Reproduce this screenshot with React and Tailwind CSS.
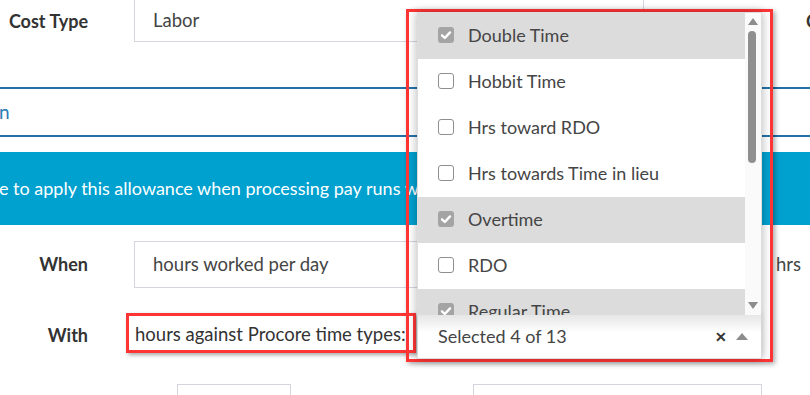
import React from "react";

const items = [
  { label: "Double Time", checked: true },
  { label: "Hobbit Time", checked: false },
  { label: "Hrs toward RDO", checked: false },
  { label: "Hrs towards Time in lieu", checked: false },
  { label: "Overtime", checked: true },
  { label: "RDO", checked: false },
  { label: "Regular Time", checked: true },
];

function Check({ checked }) {
  if (checked) {
    return (
      <span className="flex h-[16px] w-[16px] shrink-0 items-center justify-center rounded-[3px] bg-[#a4a4a4]">
        <svg width="12" height="12" viewBox="0 0 12 12" fill="none">
          <path d="M2 6.3 L4.8 9 L10 3.4" stroke="#fff" strokeWidth="2.4" strokeLinecap="round" strokeLinejoin="round" />
        </svg>
      </span>
    );
  }
  return <span className="h-[16px] w-[16px] shrink-0 rounded-[3px] border-[1.5px] border-[#8f8f8f] bg-white" />;
}

export default function App() {
  return (
    <div className="relative h-[395px] w-[810px] overflow-hidden bg-white text-[#454545]" style={{ fontFamily: "Lato, 'Noto Sans', sans-serif" }}>
      {/* Cost Type row */}
      <div className="flex h-[42px] items-stretch">
        <div className="flex w-[134px] shrink-0 items-center justify-end pr-[46px] text-[18px] font-bold text-[#333]">Cost Type</div>
        <div className="flex w-[510px] shrink-0 items-center border border-t-0 border-[#d4d5de] pl-[18px] text-[18.5px]">Labor</div>
        <div className="flex flex-1 items-center pl-[162px] text-[18px] font-bold whitespace-nowrap text-[#333]">Cost Code</div>
      </div>

      {/* Tab strip */}
      <div className="mt-[45px] flex h-[50px] items-center border-y-2 border-[#2271a8] text-[19px] text-[#2a7bb6]">
        <span className="-ml-[1px]">n</span>
      </div>

      {/* Banner */}
      <div className="mt-[15px] flex h-[73px] items-center bg-[#00a1cf] text-[18px] whitespace-nowrap text-white">
        <span className="-ml-[1px]">e to apply this allowance when processing pay runs w</span>
      </div>

      {/* When row */}
      <div className="mt-[16px] flex h-[47px] items-stretch">
        <div className="flex w-[134px] shrink-0 items-center justify-end pr-[46px] text-[18px] font-bold text-[#333]">When</div>
        <div className="flex w-[300px] shrink-0 items-center border border-[#d4d5de] pl-[18px] text-[18.5px]">hours worked per day</div>
        <div className="flex flex-1 items-center justify-end pr-[9px] text-[18.5px]">hrs</div>
      </div>

      {/* With row */}
      <div className="mt-[25px] flex h-[40px] items-stretch">
        <div className="flex w-[126px] shrink-0 items-center justify-end pt-[5px] pr-[38px] text-[18px] font-bold text-[#333]">With</div>
        <div className="flex w-[290px] shrink-0 items-center border-[3px] border-[#ff3535] pt-[4px] pl-[6px] text-[18.5px] whitespace-nowrap text-[#333] shadow-[2px_2px_4px_rgba(0,0,0,0.35)]">
          hours against Procore time types:
        </div>
      </div>

      {/* Bottom row */}
      <div className="mt-[31px] flex h-[40px]">
        <div className="ml-[177px] w-[114px] border border-[#d4d5de]" />
        <div className="ml-[182px] w-[289px] border border-[#d4d5de]" />
      </div>

      {/* Dropdown (open, overlays the form) */}
      <div className="absolute top-[9px] left-[406px] flex h-[353px] w-[367px] border-[3px] border-[#ff3535] pr-[8px] pl-[8px] shadow-[2px_2px_5px_rgba(0,0,0,0.35)]">
        <div className="flex w-[345px] flex-col border border-[#dedede] bg-white shadow-[0_0_9px_rgba(0,0,0,0.3)]">
          <div className="relative flex h-[302px] overflow-hidden">
            <div className="flex-1">
              {items.map((it) => (
                <div key={it.label} className={`flex h-[46px] items-center gap-[14px] pb-[2px] pl-[20px] text-[18px] whitespace-nowrap ${it.checked ? "bg-[#dcdcdc]" : "bg-white"}`}>
                  <Check checked={it.checked} />
                  <span>{it.label}</span>
                </div>
              ))}
            </div>
            <div className="relative w-[16px] shrink-0 bg-[#fafafa]">
              <svg className="absolute top-[5px] left-[3px]" width="10" height="7" viewBox="0 0 10 7">
                <path d="M5 0 L10 7 L0 7 Z" fill="#8c8c8c" />
              </svg>
              <div className="absolute top-[18px] left-[3px] h-[132px] w-[8px] rounded-full bg-[#8f8f8f]" />
              <svg className="absolute bottom-[6px] left-[3px]" width="10" height="7" viewBox="0 0 10 7">
                <path d="M0 0 L10 0 L5 7 Z" fill="#8c8c8c" />
              </svg>
            </div>
          </div>
          <div className="flex flex-1 items-center bg-gradient-to-b from-[#e6e6e6] via-white via-40% to-white pr-[13px] pl-[20px] text-[18px] shadow-[0_-3px_6px_rgba(0,0,0,0.08)]">
            <span>Selected 4 of 13</span>
            <span className="ml-auto text-[14px] font-bold text-[#333]">✕</span>
            <svg className="ml-[9px]" width="12" height="7" viewBox="0 0 12 7">
              <path d="M6 0 L12 7 L0 7 Z" fill="#8c8c8c" />
            </svg>
          </div>
        </div>
      </div>
    </div>
  );
}
